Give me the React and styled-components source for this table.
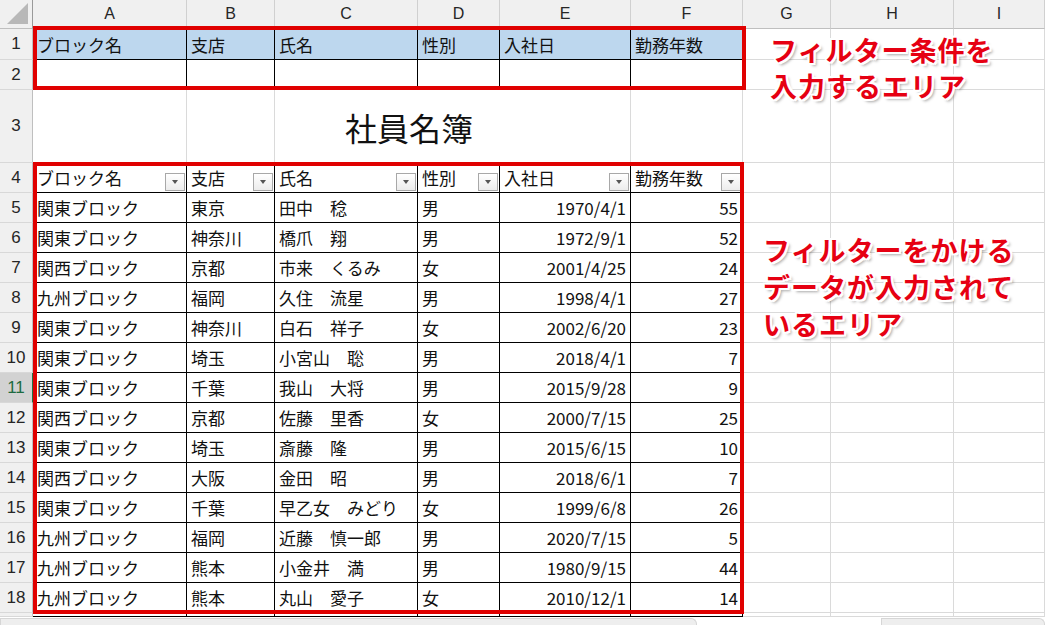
import React from 'react';
import styled, { createGlobalStyle, css } from 'styled-components';

const GlobalStyle = createGlobalStyle`
  html, body {
    margin: 0;
    padding: 0;
    background: #fff;
    overflow: hidden;
  }
  *, *::before, *::after {
    box-sizing: border-box;
  }
`;

const COLS = [33, 154, 88, 143, 82, 131, 112, 88, 123, 91];
const LETTERS = ['A', 'B', 'C', 'D', 'E', 'F', 'G', 'H', 'I'];
const HEADERS = ['ブロック名', '支店', '氏名', '性別', '入社日', '勤務年数'];
const RIGHT = [false, false, false, false, true, true];

const ROWS = [
  ['関東ブロック', '東京', '田中　稔', '男', '1970/4/1', '55'],
  ['関東ブロック', '神奈川', '橋爪　翔', '男', '1972/9/1', '52'],
  ['関西ブロック', '京都', '市来　くるみ', '女', '2001/4/25', '24'],
  ['九州ブロック', '福岡', '久住　流星', '男', '1998/4/1', '27'],
  ['関東ブロック', '神奈川', '白石　祥子', '女', '2002/6/20', '23'],
  ['関東ブロック', '埼玉', '小宮山　聡', '男', '2018/4/1', '7'],
  ['関東ブロック', '千葉', '我山　大将', '男', '2015/9/28', '9'],
  ['関西ブロック', '京都', '佐藤　里香', '女', '2000/7/15', '25'],
  ['関東ブロック', '埼玉', '斎藤　隆', '男', '2015/6/15', '10'],
  ['関西ブロック', '大阪', '金田　昭', '男', '2018/6/1', '7'],
  ['関東ブロック', '千葉', '早乙女　みどり', '女', '1999/6/8', '26'],
  ['九州ブロック', '福岡', '近藤　慎一郎', '男', '2020/7/15', '5'],
  ['九州ブロック', '熊本', '小金井　満', '男', '1980/9/15', '44'],
  ['九州ブロック', '熊本', '丸山　愛子', '女', '2010/12/1', '14'],
];

const JP = `"Noto Sans CJK JP", "Noto Sans", sans-serif`;

const Page = styled.div`
  position: relative;
  width: 1045px;
  height: 625px;
  overflow: hidden;
  font-family: ${JP};
  color: #111;
`;

const Sheet = styled.div`
  display: grid;
  grid-template-columns: ${COLS.map(w => `${w}px`).join(' ')};
  grid-template-rows: 29px 31px 30px 73px repeat(15, 30px) 4px;
`;

const Corner = styled.div`
  position: relative;
  background: #f0f0f0;
  border-right: 1px solid #9a9a9a;
  border-bottom: 1px solid #bfbfbf;

  &::after {
    content: '';
    position: absolute;
    right: 4px;
    bottom: 4px;
    border-style: solid;
    border-width: 0 0 21px 21px;
    border-color: transparent transparent #b8b8b8 transparent;
  }
`;

const ColHead = styled.div`
  display: flex;
  align-items: center;
  justify-content: center;
  background: #f0f0f0;
  border-right: 1px solid #d0d0d0;
  border-bottom: 1px solid #bfbfbf;
  font-family: "Liberation Sans", Arial, sans-serif;
  font-size: 16px;
  color: #262626;
`;

const RowHead = styled.div`
  display: flex;
  align-items: center;
  justify-content: center;
  overflow: hidden;
  background: ${p => (p.$active ? '#d2d2d2' : '#f0f0f0')};
  color: ${p => (p.$active ? '#1e6b41' : '#262626')};
  border-right: 1px solid ${p => (p.$active ? '#217346' : '#bfbfbf')};
  border-bottom: 1px solid #d8d8d8;
  font-family: "Liberation Sans", Arial, sans-serif;
  font-size: 17px;
`;

const Cell = styled.div`
  display: flex;
  align-items: center;
  justify-content: ${p => (p.$right ? 'flex-end' : 'space-between')};
  padding: ${p => (p.$right ? '0 4px 0 0' : '0 1px 0 4px')};
  background: ${p => (p.$fill ? '#bdd7ee' : '#fff')};
  border-right: 1px solid ${p => (p.$table ? '#000' : '#dadada')};
  border-bottom: 1px solid ${p => (p.$table ? '#000' : '#dadada')};
  font-size: 17px;
  line-height: 1;
  white-space: nowrap;
  overflow: hidden;
  min-width: 0;
`;

const TitleCell = styled.div`
  grid-column: span 3;
  display: flex;
  align-items: center;
  padding-left: 70px;
  border-right: 1px solid #dadada;
  font-size: 32px;
  font-weight: 400;
  white-space: nowrap;
`;

const FilterButton = styled.div`
  align-self: flex-end;
  flex: none;
  display: flex;
  align-items: center;
  justify-content: center;
  width: 20px;
  height: 18px;
  margin-bottom: 1px;
  border: 1px solid #a8a8a8;
  background: linear-gradient(#ffffff, #ececec);

  &::before {
    content: '';
    border-style: solid;
    border-width: 4px 3.5px 0 3.5px;
    border-color: #555 transparent transparent transparent;
  }
`;

const RedBox = styled.div`
  position: absolute;
  border: 4px solid #e00000;
  pointer-events: none;
  ${p => css`
    left: ${p.$x}px;
    top: ${p.$y}px;
    width: ${p.$w}px;
    height: ${p.$h}px;
  `}
`;

const Note = styled.div`
  position: absolute;
  left: ${p => p.$x}px;
  top: ${p => p.$y}px;
  font-size: 27px;
  font-weight: 700;
  letter-spacing: 1px;
  line-height: ${p => p.$lh}px;
  color: #e60012;
  white-space: nowrap;
  text-shadow:
    2px 0 0 #fff, -2px 0 0 #fff, 0 2px 0 #fff, 0 -2px 0 #fff,
    2px 2px 0 #fff, -2px -2px 0 #fff, 2px -2px 0 #fff, -2px 2px 0 #fff,
    3px 3px 3px rgba(0, 0, 0, 0.35);
`;

const TabBar = styled.div`
  display: flex;
  align-items: flex-end;
  height: 8px;
  background: #fff;
`;

const TabPiece = styled.div`
  height: 7px;
  width: ${p => p.$w}px;
  margin-left: ${p => p.$gap || 0}px;
  background: #eeeeee;
  border: 1px solid #d6d6d6;
  border-bottom: none;
  border-radius: 0 6px 0 0;
  flex: ${p => (p.$w ? 'none' : 1)};
`;

function gridRow(num, cells, opts = {}) {
  const { table = false, fill = false, active = false, head = false, data = false } = opts;
  return [
    <RowHead key={`rh${num}`} $active={active}>{opts.label === undefined ? num : opts.label}</RowHead>,
    ...LETTERS.map((l, i) => {
      const inTable = table && i < 6;
      const text = cells ? cells[i] : '';
      return (
        <Cell
          key={`${l}${num}`}
          $table={inTable}
          $fill={fill && i < 6}
          $right={inTable && data && RIGHT[i]}
        >
          {text}
          {head && i < 6 && <FilterButton />}
        </Cell>
      );
    }),
  ];
}

export default function App() {
  return (
    <Page>
      <GlobalStyle />
      <Sheet>
        <Corner />
        {LETTERS.map(l => <ColHead key={l}>{l}</ColHead>)}

        {gridRow(1, HEADERS, { table: true, fill: true })}
        {gridRow(2, null, { table: true })}

        <RowHead>3</RowHead>
        <Cell />
        <Cell />
        <TitleCell>社員名簿</TitleCell>
        <Cell />
        <Cell />
        <Cell />
        <Cell />

        {gridRow(4, HEADERS, { table: true, head: true })}
        {ROWS.map((r, i) => gridRow(i + 5, r, { table: true, data: true, active: i + 5 === 11 }))}
        {gridRow(19, null, { table: true, label: '' })}
      </Sheet>

      <TabBar>
        <TabPiece $w={697} />
        <TabPiece $gap={184} />
      </TabBar>

      <RedBox $x={33} $y={26} $w={713} $h={64} />
      <RedBox $x={33} $y={162} $w={711} $h={452} />

      <Note $x={770} $y={32} $lh={36}>
        フィルター条件を<br />入力するエリア
      </Note>
      <Note $x={763} $y={231} $lh={37}>
        フィルターをかける<br />データが入力されて<br />いるエリア
      </Note>
    </Page>
  );
}
